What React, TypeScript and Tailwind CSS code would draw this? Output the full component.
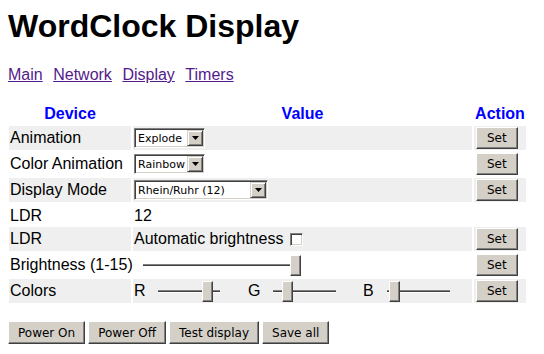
import React from "react";

function Btn({ children, className = "px-[9px]" }: { children: React.ReactNode; className?: string }) {
  return (
    <button
      className={
        "h-[22px] bg-[#d4d0c8] border border-t-white border-l-white border-r-[#404040] border-b-[#404040] shadow-[inset_-1px_-1px_0_#808080] text-[12px] text-black leading-none [font-family:'DejaVu_Sans',sans-serif] " +
        className
      }
    >
      {children}
    </button>
  );
}

function Arrow() {
  return (
    <span className="flex shrink-0 items-center justify-center w-[16px] h-[16px] bg-[#d4d0c8] border border-t-[#d4d0c8] border-l-[#d4d0c8] border-r-[#404040] border-b-[#404040] shadow-[inset_1px_1px_0_#ffffff,inset_-1px_-1px_0_#808080]">
      <svg width="7" height="4" viewBox="0 0 7 4">
        <path d="M0 0h7L3.5 4z" fill="#000" />
      </svg>
    </span>
  );
}

function Sel({ w, text }: { w: string; text: string }) {
  return (
    <div
      className={
        "flex items-center h-[20px] bg-white border border-t-[#808080] border-l-[#808080] border-b-white border-r-white shadow-[inset_1px_1px_0_#404040,inset_-1px_-1px_0_#d4d0c8] p-[1px] " +
        w
      }
    >
      <span className="flex-1 min-w-0 pl-[2px] text-[11px] text-black leading-none [font-family:'DejaVu_Sans',sans-serif] whitespace-nowrap">
        {text}
      </span>
      <Arrow />
    </div>
  );
}

function Slider({ w, thumb }: { w: string; thumb: number }) {
  return (
    <div className={"relative h-[21px] flex items-center " + w}>
      <div className="w-full flex flex-col">
        <div className="h-[1px] bg-[#808080]" />
        <div className="h-[1px] bg-[#404040]" />
        <div className="h-[1px] bg-white" />
      </div>
      <div
        className="absolute top-0 w-[11px] h-[21px] bg-[#d4d0c8] border border-t-white border-l-white border-r-[#404040] border-b-[#404040] shadow-[inset_-1px_-1px_0_#808080]"
        style={{ left: thumb }}
      />
    </div>
  );
}

function Row({
  gray,
  label,
  value,
  action = true,
  h = "h-[24px]",
}: {
  gray?: boolean;
  label: string;
  value: React.ReactNode;
  action?: boolean;
  h?: string;
}) {
  const bg = gray ? "bg-[#efefef]" : "bg-white";
  return (
    <div className={"grid grid-cols-[122px_339px_52px] gap-x-[2px] " + h}>
      <div className={"flex items-center px-[1px] whitespace-nowrap " + bg}>{label}</div>
      <div className={"flex items-center px-[1px] " + bg}>{value}</div>
      <div className={"flex items-center pl-[2px] " + bg}>
        {action ? <Btn className="px-[10px]">Set</Btn> : null}
      </div>
    </div>
  );
}

export default function App() {
  return (
    <div className="px-[8px] pt-[8px] bg-white text-black text-[16px] [font-family:'Liberation_Sans',Arial,sans-serif] min-h-[354px]">
      <h1 className="text-[32px] font-bold leading-[37px] mb-[21px]">WordClock Display</h1>
      <div className="flex gap-[10.5px] h-[18px] leading-[18px]">
        <a href="#" className="underline text-[#551a8b]">Main</a>
        <a href="#" className="underline text-[#551a8b]">Network</a>
        <a href="#" className="underline text-[#551a8b]">Display</a>
        <a href="#" className="underline text-[#551a8b]">Timers</a>
      </div>
      <div className="mt-[20px] ml-[1px] flex flex-col gap-y-[2px] w-[517px]">
        <div className="grid grid-cols-[122px_339px_52px] gap-x-[2px] h-[20px] font-bold text-[#0000ff] leading-[18px]">
          <div className="flex items-center justify-center">Device</div>
          <div className="flex items-center justify-center">Value</div>
          <div className="flex items-center justify-center">Action</div>
        </div>
        <Row gray label="Animation" value={<Sel w="w-[71px]" text="Explode" />} />
        <Row label="Color Animation" value={<Sel w="w-[71px]" text="Rainbow" />} />
        <Row gray label="Display Mode" value={<Sel w="w-[134px]" text="Rhein/Ruhr (12)" />} />
        <Row label="LDR" value={<span>12</span>} action={false} h="h-[21px]" />
        <Row
          gray
          label="LDR"
          value={
            <div className="flex items-center">
              <span>Automatic brightness</span>
              <span className="ml-[7px] w-[13px] h-[13px] bg-white border border-t-[#808080] border-l-[#808080] border-b-white border-r-white shadow-[inset_1px_1px_0_#404040,inset_-1px_-1px_0_#d4d0c8]" />
            </div>
          }
        />
        <Row
          label="Brightness (1-15)"
          value={
            <div className="ml-[9px]">
              <Slider w="w-[157px]" thumb={147} />
            </div>
          }
        />
        <Row
          gray
          label="Colors"
          value={
            <div className="flex items-center">
              <span>R</span>
              <div className="ml-[12.5px]">
                <Slider w="w-[62px]" thumb={44} />
              </div>
              <span className="ml-[28px]">G</span>
              <div className="ml-[12.5px]">
                <Slider w="w-[63px]" thumb={9} />
              </div>
              <span className="ml-[27px]">B</span>
              <div className="ml-[13px]">
                <Slider w="w-[63px]" thumb={2} />
              </div>
            </div>
          }
        />
      </div>
      <div className="mt-[18px] flex gap-[3px]">
        <Btn className="px-[9px] h-[23px]">Power On</Btn>
        <Btn className="px-[9px] h-[23px]">Power Off</Btn>
        <Btn className="px-[9px] h-[23px]">Test display</Btn>
        <Btn className="px-[9px] h-[23px]">Save all</Btn>
      </div>
    </div>
  );
}
